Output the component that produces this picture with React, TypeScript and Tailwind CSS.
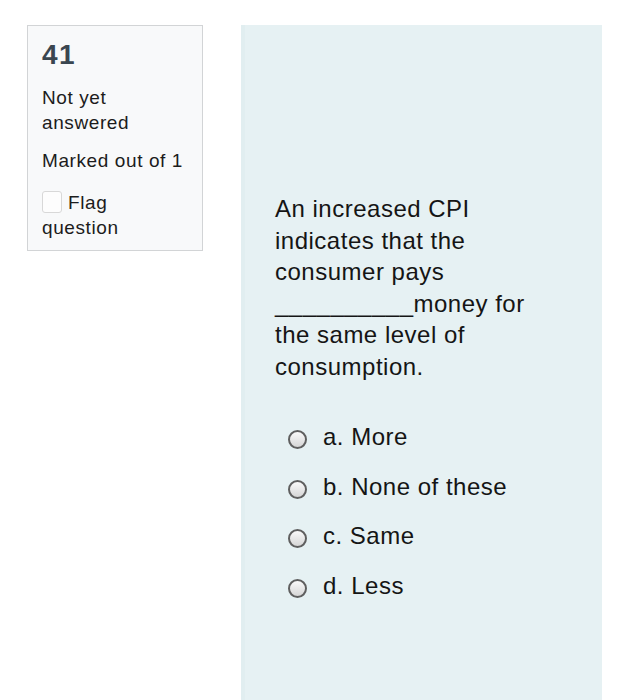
import React from 'react';

const options = ['a. More', 'b. None of these', 'c. Same', 'd. Less'];

const Radio: React.FC = () => (
  <span className="inline-block w-[19px] h-[19px] rounded-full border-2 border-[#5f5f5f] bg-gradient-to-b from-[#fafafa] to-[#d6d6d6] mt-[8px] shrink-0" />
);

const InfoCard: React.FC = () => (
  <div className="w-[176px] shrink-0 self-start bg-[#f8f9fa] border border-[#d2d4d6] pt-[13px] pb-[10px] px-[14px] text-[#1c1c1c] text-[19px] leading-[25px] tracking-[0.6px]">
    <div className="text-[28px] leading-[32px] font-bold text-[#3a4650] tracking-[1.5px]">41</div>
    <div className="mt-[14px]">
      Not yet
      <br />
      answered
    </div>
    <div className="mt-[13px] whitespace-nowrap">Marked out of 1</div>
    <div className="mt-[17px]">
      <span className="inline-block align-[-4px] w-[20px] h-[22px] border border-[#d8d8d8] rounded-[3px] bg-[#fdfdfd] mr-[6px]" />
      Flag
      <br />
      question
    </div>
  </div>
);

export default function App() {
  return (
    <div
      className="min-h-[700px] bg-white flex pt-[25px] pl-[27px] overflow-hidden"
      style={{ fontFamily: '"Liberation Sans", Arial, sans-serif' }}
    >
      <InfoCard />
      <div className="ml-[38px] w-[361px] h-[675px] bg-[#e6f1f3] border-l-[4px] border-[#e1eef0] pt-[168px] pl-[30px] text-[#151515]">
        <p className="w-[265px] text-[24px] leading-[31.5px] tracking-[0.5px]">
          An increased CPI indicates that the consumer pays __________money for the same level of consumption.
        </p>
        <div className="mt-[31px] flex flex-col pl-[13px]">
          {options.map((o) => (
            <label key={o} className="h-[49.5px] flex items-start gap-[16px] pt-[9px] text-[24px] leading-[30px] tracking-[0.5px]">
              <Radio />
              <span>{o}</span>
            </label>
          ))}
        </div>
      </div>
    </div>
  );
}
